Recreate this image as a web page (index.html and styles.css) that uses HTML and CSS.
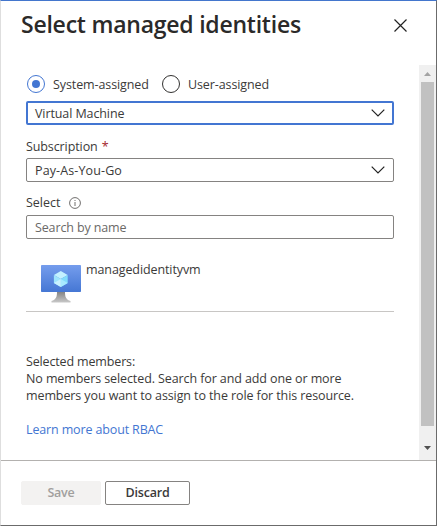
FILE: index.html
```html
<!DOCTYPE html>
<html lang="en">
<head>
<meta charset="utf-8">
<title>Select managed identities</title>
<link rel="stylesheet" href="styles.css">
</head>
<body>
<section class="panel">
  <header class="header">
    <h1 class="title">Select managed identities</h1>
    <svg class="close" width="13" height="13" viewBox="0 0 13 13"><path d="M.5.5l12 12M12.5.5l-12 12"/></svg>
  </header>
  <div class="body">
    <main class="content">
      <div class="radios">
        <span class="radio on"></span><span class="t-system">System-assigned</span>
        <span class="radio"></span><span class="t-user">User-assigned</span>
      </div>
      <div class="field focused"><span class="t-vm">Virtual Machine</span><svg class="chevron" width="14" height="8" viewBox="0 0 14 8"><path d="M.7.7L7 7 13.3.7"/></svg></div>
      <div class="label"><span class="t-sub">Subscription</span><span class="required">*</span></div>
      <div class="field"><span class="t-pay">Pay-As-You-Go</span><svg class="chevron" width="14" height="8" viewBox="0 0 14 8"><path d="M.7.7L7 7 13.3.7"/></svg></div>
      <div class="label"><span class="t-select">Select</span><svg class="info" width="12" height="12" viewBox="0 0 12 12"><circle cx="6" cy="6" r="5.4"/><path d="M6 5v4M6 3v1"/></svg></div>
      <div class="field"><span class="placeholder">Search by name</span></div>
      <div class="member">
        <svg class="vm" width="40" height="38" viewBox="0 0 40 38">
          <defs>
            <linearGradient id="screen" x2="0" y2="1"><stop stop-color="#759ded"/><stop offset="1" stop-color="#4577d4"/></linearGradient>
            <linearGradient id="stand" x2="0" y2="1"><stop stop-color="#858585"/><stop offset="1" stop-color="#c9c9c9"/></linearGradient>
          </defs>
          <path fill="url(#stand)" d="M16 27h8c0 5 1 7.500 5.500 9v1.600h-19V36c4.500-1.500 5.500-4 5.500-9z"/>
          <rect width="40" height="27" rx=".8" fill="url(#screen)"/>
          <path fill="#c3f1ff" d="M19.800 6l6.900 4-6.900 4-6.900-4z"/>
          <path fill="#9ee4fd" d="M12.900 10l6.900 4v8l-6.900-4z"/>
          <path fill="#83dcfb" d="M26.700 10l-6.900 4v8l6.900-4z"/>
          <path fill="#c9f2ff" d="M12.900 18l6.900-4v8z"/>
          <path fill="#a8eaff" d="M26.700 18l-6.900-4v8z"/>
        </svg>
        <span class="t-member">managedidentityvm</span>
      </div>
      <div class="summary">
        <div class="t-members">Selected members:</div>
        <div class="t-line1">No members selected. Search for and add one or more</div>
        <div class="t-line2">members you want to assign to the role for this resource.</div>
      </div>
      <a class="link">Learn more about RBAC</a>
    </main>
    <div class="scrollbar">
      <svg width="7" height="4" viewBox="0 0 7 4"><path fill="#a3a3a3" d="M3.500 0L7 4H0z"/></svg>
      <div class="thumb"></div>
      <svg width="7" height="4" viewBox="0 0 7 4"><path fill="#505050" d="M0 0h7L3.500 4z"/></svg>
    </div>
  </div>
  <footer class="footer">
    <div class="button save">Save</div>
    <div class="button discard">Discard</div>
  </footer>
</section>
</body>
</html>
```
FILE: styles.css
```css
* { box-sizing: border-box; }
body { margin: 0; background: #fff; }
.panel {
  width: 437px; height: 526px; display: flex; flex-direction: column;
  border: 1px solid #6b6b6b; border-top-color: #4376cd; border-left-color: #dedede;
  font: 12.500px/17px "Open Sans", "Noto Sans", sans-serif; color: #3b3a39;
  letter-spacing: -.1px; white-space: nowrap; overflow: hidden;
}
.header { height: 64px; flex: none; display: flex; justify-content: space-between; padding: 7px 29px 0 20px; }
.title { margin: 0; font-size: 23px; line-height: 33px; font-weight: 600; letter-spacing: -.23px; color: #2b2a29; }
.close { margin-top: 11px; }
.close path, .chevron path { fill: none; stroke: #222; stroke-width: 1.200; }
.body { height: 395px; flex: none; display: flex; justify-content: space-between; }
.content { width: 368px; margin-left: 25px; }
.radios { display: flex; align-items: center; height: 18px; margin-top: 10px; padding-left: 1px; }
.radio { width: 18px; height: 18px; border: 1px solid #323130; border-radius: 50%; margin-right: 8px; display: grid; place-items: center; }
.radio.on { border-color: #4376d2; }
.radio.on::before { content: ""; width: 8px; height: 8px; border-radius: 50%; background: #4376d2; }
.t-system { width: 109px; }
.field { display: flex; align-items: center; justify-content: space-between; height: 24px; padding: 0 8px; border: 1px solid #858381; border-radius: 2px; }
.field.focused { margin-top: 8px; border: 2px solid #4376d2; padding: 0 7px; }
.t-pay { letter-spacing: .12px; }
.label { display: flex; align-items: center; height: 17px; margin: 12px 0 4px; }
.field.focused + .label { margin-top: 13px; margin-bottom: 3px; }
.required { color: #a4262c; margin-left: 4px; }
.t-select { letter-spacing: 0; }
.info { margin: 1px 0 0 8px; }
.info circle, .info path { fill: none; stroke: #605e5c; stroke-width: .9; }
.placeholder { color: #6b6967; letter-spacing: -.13px; }
.member { display: flex; height: 73px; padding: 26px 0 0 15px; border-bottom: 1px solid #c8c6c4; }
.t-member { margin: -4px 0 0 5px; }
.summary { margin-top: 41px; }
.t-members { letter-spacing: -.15px; }
.link { display: block; margin-top: 17px; color: #4376d2; letter-spacing: -.14px; }
.scrollbar { width: 17px; background: #f0f0f0; display: flex; flex-direction: column; align-items: center; padding: 7px 0 10px; }
.thumb { width: 13px; height: 344px; background: #c1c1c1; margin: 6px 0 auto; }
.footer { flex: 1; border-top: 1px solid #b3b1af; display: flex; gap: 4px; padding: 20px 0 0 20px; }
.button { height: 24px; line-height: 22px; text-align: center; border: 1px solid #858381; border-radius: 2px; font-weight: 600; letter-spacing: -.2px; }
.save { width: 80px; background: #f3f2f1; border-color: #f3f2f1; color: #a19f9d; }
.discard { width: 85px; }
```
